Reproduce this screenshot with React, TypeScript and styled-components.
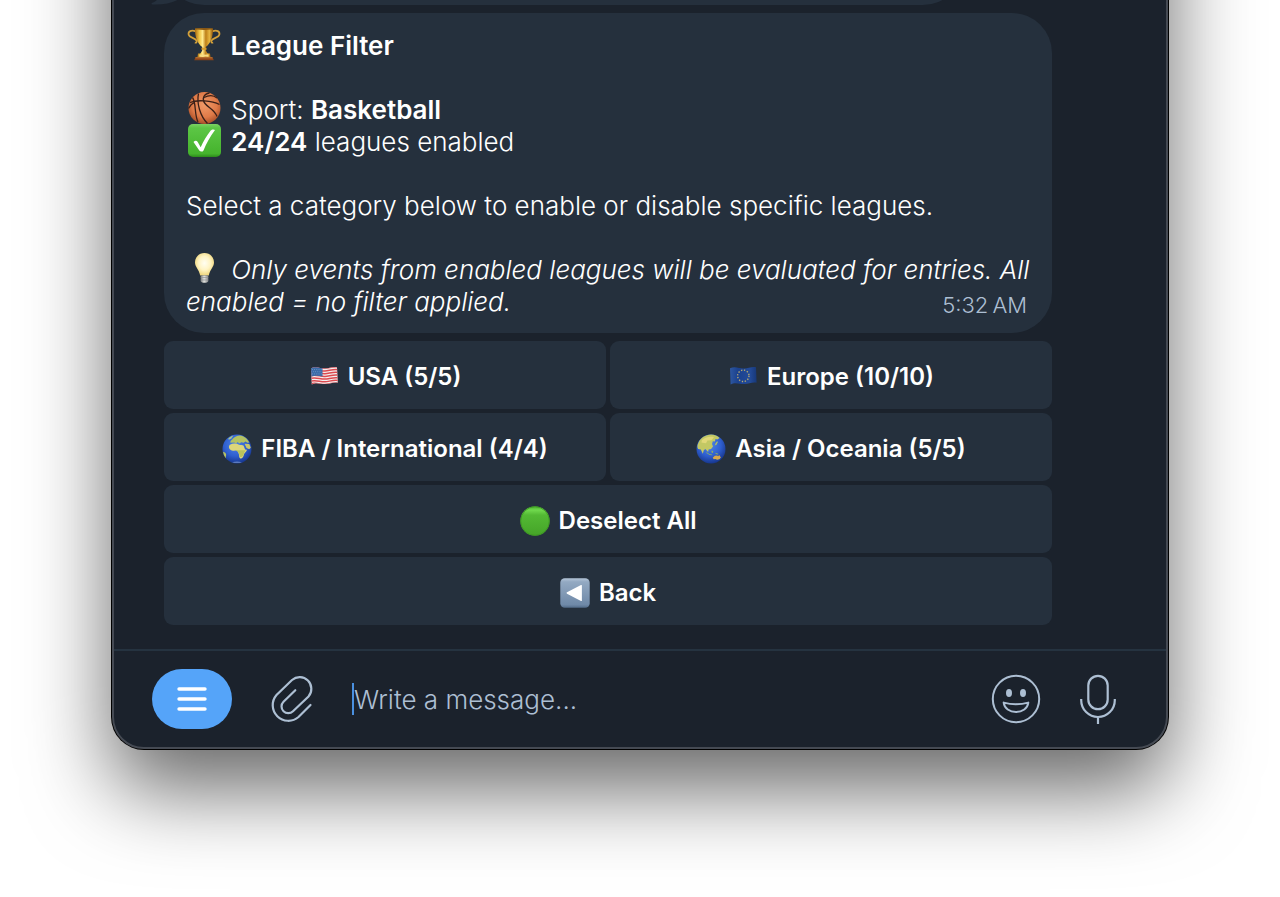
import React from "react";
import styled, { createGlobalStyle, css } from "styled-components";

const c = {
  window: "#1b222c",
  bubble: "#25303d",
  frame: "#454a53",
  line: "#253340",
  muted: "#adbfd3",
  accent: "#55a4f9",
};

const GlobalStyle = createGlobalStyle`
  *, *::before, *::after { box-sizing: border-box; }
  body { margin: 0; background: #fff; font-family: Inter, "Liberation Sans", sans-serif; color: #fff; }
  button, input { font: inherit; color: inherit; }
`;

const Page = styled.main`
  padding: 0 112px 148px;
  overflow: hidden;
`;

const ChatWindow = styled.section`
  margin-top: -240px;
  border: 2px solid ${c.frame};
  border-radius: 32px;
  background: ${c.window};
  box-shadow: 0 0 0 1px #000, 0 40px 84px rgba(0, 0, 0, 0.6);
`;

const Thread = styled.div`
  display: flex;
  flex-direction: column;
  gap: 8px;
  padding: 38px 114px 24px 50px;
`;

const bubble = css`
  background: ${c.bubble};
  border-radius: 40px;
`;

const EarlierBubble = styled.div`
  ${bubble}
  position: relative;
  width: 90%;
  height: 205px;
`;

const Tail = styled.svg`
  position: absolute;
  left: -13px;
  bottom: 0;
  width: 32px;
  height: 24px;
`;

const Message = styled.article`
  ${bubble}
  padding: 17px 14px 15px 22px;
  font-size: 26px;
  line-height: 32px;
  font-weight: 300;
`;

const Paragraph = styled.p`
  margin: 0 0 32px;
  &:last-child { margin-bottom: 0; }
`;

const Title = styled.h1`
  margin: 0 0 32px;
  font-size: 26px;
  line-height: 32px;
  font-weight: 600;
`;

const Strong = styled.strong`
  font-weight: 600;
`;

const Time = styled.time`
  float: right;
  padding: 6px 11px 0 0;
  font-size: 22px;
  line-height: 26px;
  color: ${c.muted};
`;

const InlineEmoji = styled.svg`
  width: 34px;
  height: 34px;
  margin: -4px 3px -4px 1px;
  vertical-align: -2px;
`;

const Keyboard = styled.div`
  display: grid;
  grid-template-columns: 1fr 1fr;
  gap: 4px;
`;

const Key = styled.button<{ $wide?: boolean }>`
  grid-column: ${(p) => (p.$wide ? "1 / -1" : "auto")};
  display: flex;
  align-items: center;
  justify-content: center;
  gap: 9px;
  height: 68px;
  padding: 3px 0 0;
  border: 0;
  border-radius: 9px;
  background: ${c.bubble};
  font-size: 24px;
  line-height: 32px;
  font-weight: 600;
  cursor: pointer;
`;

const KeyEmoji = styled.svg`
  width: 30px;
  height: 30px;
`;

const Composer = styled.form`
  display: flex;
  align-items: center;
  gap: 38px;
  height: 98px;
  padding: 0 49px 0 38px;
  border-top: 2px solid ${c.line};
`;

const MenuButton = styled.button`
  display: grid;
  place-items: center;
  width: 80px;
  height: 60px;
  padding: 0;
  border: 0;
  border-radius: 30px;
  background: ${c.accent};
`;

const IconButton = styled.button`
  display: grid;
  place-items: center;
  padding: 0;
  border: 0;
  background: none;
  color: ${c.muted};
`;

const MessageInput = styled.input`
  flex: 1;
  min-width: 0;
  height: 32px;
  padding: 0;
  border: 0;
  border-left: 2px solid #4a90e0;
  outline: 0;
  background: none;
  font-size: 26px;
  font-weight: 300;
  &::placeholder { color: ${c.muted}; opacity: 1; }
`;

const Trophy = () => (
  <InlineEmoji viewBox="0 0 34 34" aria-hidden="true">
    <defs>
      <linearGradient id="gold" x1="0" x2="1" y1="0" y2="0">
        <stop offset="0" stopColor="#a86a10" />
        <stop offset=".25" stopColor="#f0c648" />
        <stop offset=".42" stopColor="#ffe98c" />
        <stop offset=".6" stopColor="#bd7f18" />
        <stop offset=".8" stopColor="#e6b540" />
        <stop offset="1" stopColor="#8c530c" />
      </linearGradient>
    </defs>
    <g fill="none" stroke="#d3a03a" strokeWidth="1.7">
      <path d="M9 4.5C4 2.500 1 4.500 1.600 7.500 2.300 11 8 10.500 9.500 13.500c.8 1.700-.4 2.600-1.600 1.900" />
      <path d="M25 4.500c5-2 8 0 7.400 3-.7 3.500-6.400 3-7.900 6-.8 1.700.4 2.600 1.600 1.900" />
    </g>
    <path d="M8 1.500h18c.2 8-2 14.500-7.200 18.500v3.500l2 3.500h-7.600l2-3.500V20C10 16 7.800 9.500 8 1.500z" fill="url(#gold)" />
    <ellipse cx="17" cy="1.900" rx="9" ry="1" fill="#8a5714" />
    <path d="M14.500 20.800h5v2h-5z" fill="#d49b2c" />
    <path d="M11 26.500h12l.7 4H10.300z" fill="url(#gold)" />
    <path d="M12.500 27.600h9v2h-9z" fill="#f7dc86" />
    <path d="M8.500 30.300h17l1.300 2.900H7.200z" fill="#8c4319" />
    <path d="M8.500 30.300h17v1h-17z" fill="#c57a33" />
  </InlineEmoji>
);

const Basketball = () => (
  <InlineEmoji viewBox="0 0 34 34" aria-hidden="true">
    <defs>
      <radialGradient id="ball" cx=".5" cy=".4" r=".6">
        <stop offset="0" stopColor="#f09a68" />
        <stop offset=".65" stopColor="#df7a48" />
        <stop offset="1" stopColor="#a94f28" />
      </radialGradient>
    </defs>
    <circle cx="17.500" cy="17" r="16" fill="url(#ball)" />
    <g fill="none" stroke="#3b2018" strokeWidth="1.300">
      <path d="M3 11.500C10 8.500 25 9.500 32.500 13.500" />
      <path d="M11.500 2.500C9.500 12 13 25 20.500 32.500" />
      <path d="M22.500 2c-6 1-8 6-4.500 10.500 3.500 4.500 9.500 6 12 13" />
      <path d="M5.500 6.500C9.500 12 7 23 11 31" />
      <path d="M1.500 17.500c1.500-3 3.500-5 6-6" />
      <path d="M17 6.500c5-2.500 9.500-2.500 13 .5" />
    </g>
  </InlineEmoji>
);

const CheckMark = () => (
  <InlineEmoji viewBox="0 0 34 34" aria-hidden="true">
    <defs>
      <linearGradient id="tick" x1="0" x2="0" y1="0" y2="1">
        <stop offset="0" stopColor="#7cd264" />
        <stop offset=".12" stopColor="#5cc645" />
        <stop offset=".9" stopColor="#45b32d" />
        <stop offset="1" stopColor="#2c8a1b" />
      </linearGradient>
    </defs>
    <rect x="1" y="1" width="33" height="33" rx="5" fill="url(#tick)" />
    <path d="M6.500 19.100c1.600-1.700 3.300-1.600 4.200 0l3 5.100c2.700-6 6-11.500 10-16.700 1-1.300 3.400-1.500 4.300-.4-5 6.500-8.500 13.200-11.500 20.300-.8 1.500-3.300 1.600-4.200.1z" fill="#fff" />
  </InlineEmoji>
);

const Bulb = () => (
  <InlineEmoji viewBox="0 0 34 34" aria-hidden="true">
    <defs>
      <radialGradient id="glow" cx=".5" cy=".45" r=".55">
        <stop offset="0" stopColor="#fffef2" />
        <stop offset=".55" stopColor="#fff4c4" />
        <stop offset="1" stopColor="#efd67c" />
      </radialGradient>
      <linearGradient id="cap" x1="0" x2="1">
        <stop offset="0" stopColor="#77797a" />
        <stop offset=".45" stopColor="#e5e5e1" />
        <stop offset="1" stopColor="#85878a" />
      </linearGradient>
    </defs>
    <path d="M17.500 2C11.800 2 8 6.200 8 11.300c0 4.700 3.800 6.700 5.200 13.200h8.600C23.200 18 27 16 27 11.300 27 6.200 23.200 2 17.500 2z" fill="url(#glow)" />
    <path d="M13.700 24.500h7.600V30c0 1-1.500 1.800-3.800 1.800s-3.800-.8-3.800-1.800z" fill="url(#cap)" />
    <path d="M13.700 26.500h7.600M13.700 29h7.600" stroke="#8e9092" strokeWidth=".7" />
  </InlineEmoji>
);

const UsaFlag = () => (
  <KeyEmoji viewBox="0 0 30 30" aria-hidden="true">
    <defs>
      <clipPath id="usWave">
        <path d="M2 6.300c5-2.600 9.500.4 14 .2 4-.1 8-2.200 12-1.300l.8 15.500c-4-1-8 1.200-12 1.400-5 .2-9.500-2.200-14 .4z" />
      </clipPath>
    </defs>
    <g clipPath="url(#usWave)">
      <path d="M0 0h30v30H0z" fill="#f4eeee" />
      <g fill="none" stroke="#dc4a50" strokeWidth="1.500">
        {[5.800, 8.500, 11.200, 13.900, 16.600, 19.300, 22].map((y) => (
          <path key={y} d={`M1 ${y}c6-2 10 .8 15 .5 4-.2 8-2 13-1.300`} />
        ))}
      </g>
      <path d="M1 3h12.500v11.500C9.500 13.500 5.500 13.300 2 14.500z" fill="#3b6ba8" />
      <g fill="none" stroke="#83a8d1" strokeWidth=".7" strokeDasharray=".8 1.400">
        <path d="M3 7.500h10M4 9.700h9M3 11.900h10" />
      </g>
    </g>
  </KeyEmoji>
);

const EuropeFlag = () => (
  <KeyEmoji viewBox="0 0 30 30" aria-hidden="true">
    <defs>
      <linearGradient id="eu" x1="0" x2="1">
        <stop offset="0" stopColor="#2e57a0" />
        <stop offset=".3" stopColor="#1b418e" />
        <stop offset=".75" stopColor="#234b99" />
        <stop offset="1" stopColor="#173879" />
      </linearGradient>
    </defs>
    <path d="M2 6.300c5-2.600 9.500.4 14 .2 4-.1 8-2.200 12-1.300l.6 15.500c-4-1-8 1.200-12 1.400-5 .2-9.500-2.200-14 .4z" fill="url(#eu)" />
    <circle cx="15.300" cy="13.800" r="5.700" fill="none" stroke="#b9ab70" strokeWidth="1.300" strokeDasharray="1.300 1.684" />
  </KeyEmoji>
);

const OceanGradient = ({ id }: { id: string }) => (
  <defs>
    <radialGradient id={id} cx=".45" cy=".35" r=".65">
      <stop offset="0" stopColor="#4f86e6" />
      <stop offset=".6" stopColor="#2f5fd0" />
      <stop offset="1" stopColor="#17378f" />
    </radialGradient>
  </defs>
);

const AfricaGlobe = () => (
  <KeyEmoji viewBox="0 0 30 30" aria-hidden="true">
    <OceanGradient id="oceanWest" />
    <circle cx="15" cy="15" r="14.500" fill="url(#oceanWest)" />
    <path d="M8.500 8.800C8 6.500 10 6.200 10.800 4.700 12.500 3 15 1.600 18 1.500c4 .6 7.600 3.400 9.300 7l-2 .2-1.700-1.200-2 1.300-2.300-.5-2 1.300-1.700-1.600-1.500 1.600-1.800-1z" fill="#b4c262" />
    <path d="M7.800 10.800c3-1.500 6.500-1.500 8.700-.4 2.300.8 3.800.3 5 1.200l1.600 3.900 1.900.3c-.5 2-3.100 3.300-3.300 5.400-.4 2-1.800 3.700-3.300 3.200-1.800-1-.9-3.600-1.900-5.200-.5-2-1-2.800-2.500-2.700-2 .3-4.500.3-6.200-1.300-1.400-1.400-1-3.300 0-4.400z" fill="#ddd67a" />
    <path d="M13.500 16c3 .6 7-.2 10.200.6-1.300 1.500-1.900 2.900-2.300 4.600-1.200 1.700-2.600 2.200-3.400 1.700-.9-1.600-.5-3-1.500-4.400-.8-1-2-1.300-3-2.500z" fill="#b9c35c" />
    <path d="M22.600 9.700l4.700.2 1.500 3.800-1.600 1.500-2.700-1.200z" fill="#c8c56a" />
    <path d="M1 17.700c2 .2 3.600 2 3.100 3.800-.4 1-.2 2.200-.4 2.700A14 14 0 0 1 1 17.700z" fill="#b8c15f" />
    <path d="M6.200 4.800c1.500-1.800 3.400-2.700 5-3l-1.800 2.800-2.500 1.200z" fill="#a9c58b" />
    <path d="M10 28.200c3.200-.9 7-.9 10 0-3 1.200-7 1.200-10 0z" fill="#9cb7e6" opacity=".5" />
  </KeyEmoji>
);

const AsiaGlobe = () => (
  <KeyEmoji viewBox="0 0 30 30" aria-hidden="true">
    <OceanGradient id="oceanEast" />
    <circle cx="15" cy="15" r="14.500" fill="url(#oceanEast)" />
    <path d="M2.300 9C4.500 4 9.500.7 15 .6c3.600.2 6.500 1.400 8.600 3.400l-2.300 1.400-1.800-.3-.7 2.500-2-.3-.8 2.800 1 2.300-1.900 2.500-2.500.5-.5 2.600-2.700-3-1.600 1.200-1 3.500-2-4.300-2.700-.4C1 13 1.400 11 2.300 9z" fill="#c3c864" />
    <path d="M6 6c4-3 8-3.800 12-2.800l-2.500 3-4 .4-1.500 2.700-4.600-.7z" fill="#e1d879" />
    <path d="M19.500 9.500l1.600-2.200.8.700-1.400 2.800-1.800.7z" fill="#b5c25c" />
    <path d="M10.500 18l2.800 2 2.600.5.700.7-3-.1-3.100-2.100zM15.600 16.500l1.600.6-.3 1.900-1.400-.6zM19.500 18.800l3.200 1.200-.8.600-2.300-.6z" fill="#8fae62" />
    <path d="M16.700 23.800l2.100-2 2.300-.4 1 .8 1.100-1.300 1.700 2.600-1.500 1.800-2.300.4-1.700-.8-1.700.4z" fill="#d7a84c" />
  </KeyEmoji>
);

const GreenCircle = () => (
  <KeyEmoji viewBox="0 0 30 30" aria-hidden="true">
    <defs>
      <linearGradient id="green" x1="0" x2="0" y1="0" y2="1">
        <stop offset="0" stopColor="#48ad2d" />
        <stop offset=".13" stopColor="#70d94d" />
        <stop offset=".3" stopColor="#53b934" />
        <stop offset="1" stopColor="#45a428" />
      </linearGradient>
    </defs>
    <circle cx="15" cy="15" r="14.700" fill="url(#green)" />
    <circle cx="15" cy="15" r="14.300" fill="none" stroke="#3c9622" strokeWidth=".8" />
  </KeyEmoji>
);

const BackSquare = () => (
  <KeyEmoji viewBox="0 0 30 30" aria-hidden="true">
    <defs>
      <linearGradient id="steel" x1="0" x2="0" y1="0" y2="1">
        <stop offset="0" stopColor="#b4c5d8" />
        <stop offset=".12" stopColor="#93a9c2" />
        <stop offset=".9" stopColor="#6f89a8" />
        <stop offset="1" stopColor="#526b89" />
      </linearGradient>
    </defs>
    <rect x=".3" y=".3" width="29.400" height="29.400" rx="4.500" fill="url(#steel)" />
    <path d="M7 14.300L21 7c.5-.2.900 0 .9.500v15c0 .5-.4.700-.9.500L7 15.700c-.6-.4-.6-1 0-1.400z" fill="#fff" />
  </KeyEmoji>
);

const MenuIcon = () => (
  <svg width="32" height="28" viewBox="0 0 32 28" fill="none" stroke="#fff" strokeWidth="3.400" strokeLinecap="round" aria-hidden="true">
    <path d="M3 4h26M3 14h26M3 24h26" />
  </svg>
);

const ClipIcon = () => (
  <svg width="44" height="48" viewBox="-1 0 44 48" fill="none" stroke="currentColor" strokeWidth="2.200" strokeLinecap="round" aria-hidden="true">
    <path d="M39.500 30L27.500 42A15.600 15.600 0 0 1 5.500 20L21 5A11.700 11.700 0 0 1 37.500 21.500L22 36.200A6.700 6.700 0 0 1 12.500 26.700L24.300 15.200" />
  </svg>
);

const SmileIcon = () => (
  <svg width="50" height="50" viewBox="0 0 50 50" fill="none" stroke="currentColor" strokeWidth="2" aria-hidden="true">
    <circle cx="25" cy="25" r="23.200" />
    <ellipse cx="18" cy="19" rx="3" ry="4" fill="currentColor" stroke="none" />
    <ellipse cx="32" cy="19" rx="3" ry="4" fill="currentColor" stroke="none" />
    <path d="M12.700 28.600c8 2 16.600 2 24.600 0-.7 6-6 9.400-12.300 9.400s-11.600-3.400-12.300-9.400z" strokeLinejoin="round" />
  </svg>
);

const MicIcon = () => (
  <svg width="38" height="50" viewBox="0 0 38 50" fill="none" stroke="currentColor" strokeWidth="2.200" aria-hidden="true">
    <rect x="9.300" y="1.800" width="19.400" height="33.400" rx="9.700" />
    <path d="M2.200 25v1.200a16.800 16.800 0 0 0 33.600 0V25M19 43v7" />
  </svg>
);

export default function App() {
  return (
    <>
      <GlobalStyle />
      <Page>
        <ChatWindow>
          <Thread>
            <EarlierBubble>
              <Tail viewBox="0 0 32 24" aria-hidden="true">
                <path d="M13 0v6c-1 7-5 13-12 16-1 .6-.7 1.400.5 1.500C13 24 22 22 30 17L32 0z" fill={c.bubble} />
              </Tail>
            </EarlierBubble>
            <Message>
              <Title>
                <Trophy /> League Filter
              </Title>
              <Paragraph>
                <Basketball /> Sport: <Strong>Basketball</Strong>
                <br />
                <CheckMark /> <Strong>24/24</Strong> leagues enabled
              </Paragraph>
              <Paragraph>Select a category below to enable or disable specific leagues.</Paragraph>
              <Paragraph>
                <Bulb /> <em>Only events from enabled leagues will be evaluated for entries. All</em>{" "}
                <em>enabled = no filter applied.</em>
                <Time dateTime="05:32">5:32{"\u202f"}AM</Time>
              </Paragraph>
            </Message>
            <Keyboard>
              <Key type="button"><UsaFlag />USA (5/5)</Key>
              <Key type="button"><EuropeFlag />Europe (10/10)</Key>
              <Key type="button"><AfricaGlobe />FIBA / International (4/4)</Key>
              <Key type="button"><AsiaGlobe />Asia / Oceania (5/5)</Key>
              <Key type="button" $wide><GreenCircle />Deselect All</Key>
              <Key type="button" $wide><BackSquare />Back</Key>
            </Keyboard>
          </Thread>
          <Composer onSubmit={(e) => e.preventDefault()}>
            <MenuButton type="button" aria-label="Menu"><MenuIcon /></MenuButton>
            <IconButton type="button" aria-label="Attach a file"><ClipIcon /></IconButton>
            <MessageInput type="text" aria-label="Message" placeholder="Write a message..." />
            <IconButton type="button" aria-label="Emoji"><SmileIcon /></IconButton>
            <IconButton type="button" aria-label="Voice message"><MicIcon /></IconButton>
          </Composer>
        </ChatWindow>
      </Page>
    </>
  );
}
